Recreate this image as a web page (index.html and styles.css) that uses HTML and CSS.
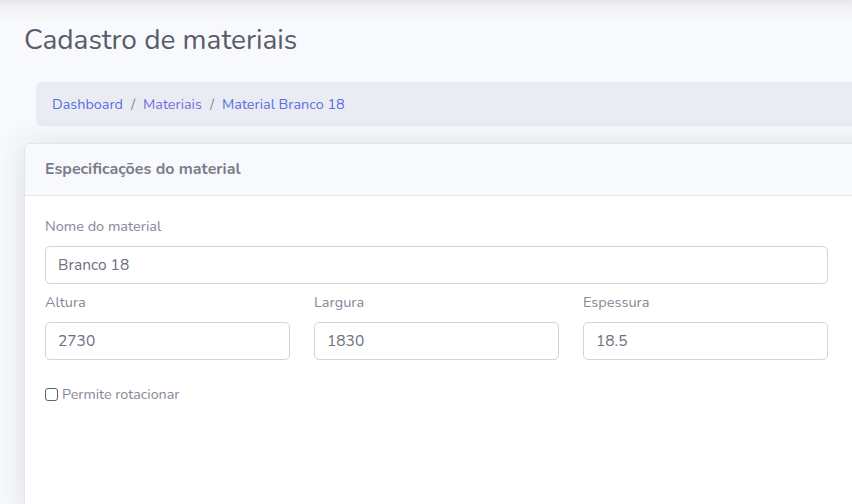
FILE: index.html
```html
<!DOCTYPE html>
<html lang="pt-BR">
<head>
<meta charset="utf-8">
<title>Cadastro de materiais</title>
<link rel="stylesheet" href="styles.css">
</head>
<body>
<div class="page">
  <h1 class="page-title">Cadastro de materiais</h1>
  <nav class="breadcrumb">
    <a class="crumb" href="#">Dashboard</a>
    <span class="sep">/</span>
    <a class="crumb visited" href="#">Materiais</a>
    <span class="sep">/</span>
    <span class="crumb">Material Branco 18</span>
  </nav>
  <section class="card">
    <header class="card-header">Especificações do material</header>
    <div class="card-body">
      <div class="row">
        <div class="col col-9">
          <label class="label">Nome do material</label>
          <div class="input">Branco 18</div>
        </div>
        <div class="col col-3"></div>
      </div>
      <div class="row row-gap">
        <div class="col col-3">
          <label class="label">Altura</label>
          <div class="input">2730</div>
        </div>
        <div class="col col-3">
          <label class="label">Largura</label>
          <div class="input">1830</div>
        </div>
        <div class="col col-3">
          <label class="label">Espessura</label>
          <div class="input">18.5</div>
        </div>
        <div class="col col-3">
          <label class="label">&nbsp;</label>
          <div class="input"></div>
        </div>
      </div>
      <div class="check-row">
        <span class="checkbox"></span>
        <span class="check-label">Permite rotacionar</span>
      </div>
    </div>
  </section>
</div>
</body>
</html>
```

FILE: styles.css
```css
html, body {
  margin: 0;
  padding: 0;
  overflow: hidden;
  height: 100%;
}
body {
  background: #f8f9fc;
  font-family: "Nunito", "Open Sans", "Noto Sans", sans-serif;
}
.page {
  width: 1142px;
  height: 100%;
  padding: 0 0 0 24px;
  box-sizing: border-box;
  background: linear-gradient(#e4e4e7 0, #ececee 3px, #f3f3f5 10px, #f8f9fc 22px);
  display: flex;
  flex-direction: column;
}
.page-title {
  margin: 24px 0 0 0;
  font-size: 28px;
  font-weight: 400;
  line-height: 1.2;
  color: #5a5c69;
}
.breadcrumb {
  margin: 24px 0 0 12px;
  height: 44px;
  box-sizing: border-box;
  padding: 0 16px;
  display: flex;
  align-items: center;
  gap: 8px;
  background: #eaecf4;
  border-radius: 5px;
  font-size: 14.4px;
}
.crumb {
  color: #5a6ee0;
  text-decoration: none;
}
.crumb.visited {
  color: #7b6ad9;
}
.sep {
  color: #858796;
}
.card {
  margin-top: 17px;
  flex: 1;
  background: #fff;
  border: 1px solid #e3e6f0;
  border-bottom: none;
  border-radius: 6px 6px 0 0;
  box-shadow: 0 0.15rem 1.75rem 0 rgba(58, 59, 69, 0.15);
}
.card-header {
  height: 52px;
  box-sizing: border-box;
  padding: 0 20px;
  display: flex;
  align-items: center;
  background: #f8f9fc;
  border-bottom: 1px solid #e3e6f0;
  border-radius: 6px 6px 0 0;
  font-size: 16px;
  font-weight: 700;
  color: #7b7d8a;
}
.card-body {
  padding: 20px 20px;
}
.row {
  display: flex;
  margin: 0 -12px;
}
.row-gap {
  margin-top: 8px;
}
.col {
  padding: 0 12px;
  box-sizing: border-box;
}
.col-9 { width: 807px; }
.col-3 { width: 269px; }
.label {
  display: block;
  font-size: 14.5px;
  line-height: 21px;
  color: #858796;
  margin-bottom: 9px;
}
.input {
  height: 38px;
  box-sizing: border-box;
  border: 1px solid #d1d3e2;
  border-radius: 5px;
  padding: 0 12px;
  display: flex;
  align-items: center;
  font-size: 15.5px;
  color: #6e707e;
  background: #fff;
}
.check-row {
  margin-top: 25px;
  display: flex;
  align-items: center;
  gap: 4px;
}
.checkbox {
  width: 13px;
  height: 13px;
  box-sizing: border-box;
  border: 1px solid #5f616c;
  border-radius: 3px;
  background: #fff;
}
.check-label {
  font-size: 14.3px;
  color: #858796;
}
```
